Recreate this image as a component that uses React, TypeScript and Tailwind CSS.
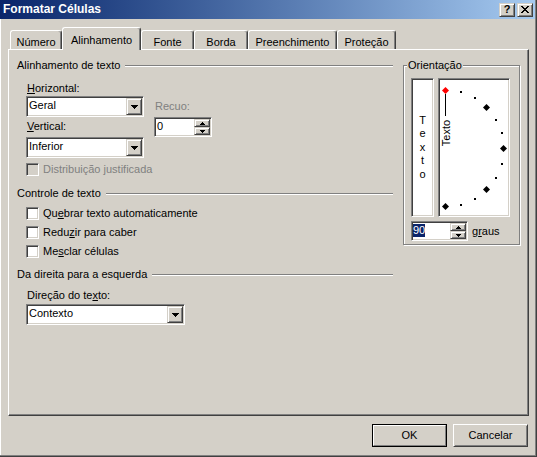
import React from "react";

const sunken =
  "border border-t-[#808080] border-l-[#808080] border-b-white border-r-white shadow-[inset_1px_1px_0_#404040,inset_-1px_-1px_0_#d4d0c8]";
const raised =
  "border border-t-[#d4d0c8] border-l-[#d4d0c8] border-b-[#404040] border-r-[#404040] shadow-[inset_1px_1px_0_#fff,inset_-1px_-1px_0_#808080] bg-[#d4d0c8]";
const pushBtn =
  "border border-t-white border-l-white border-b-[#404040] border-r-[#404040] shadow-[inset_1px_1px_0_#d4d0c8,inset_-1px_-1px_0_#808080]";

function DownArrow() {
  return (
    <svg width="7" height="4" shapeRendering="crispEdges">
      <rect x="0" y="0" width="7" height="1" />
      <rect x="1" y="1" width="5" height="1" />
      <rect x="2" y="2" width="3" height="1" />
      <rect x="3" y="3" width="1" height="1" />
    </svg>
  );
}

function SmallArrow({ up }: { up?: boolean }) {
  return (
    <svg width="5" height="3" shapeRendering="crispEdges" className={up ? "rotate-180" : ""}>
      <rect x="0" y="0" width="5" height="1" />
      <rect x="1" y="1" width="3" height="1" />
      <rect x="2" y="2" width="1" height="1" />
    </svg>
  );
}

function Combo({ value, className }: { value: string; className: string }) {
  return (
    <div className={`flex h-[21px] bg-white p-px ${sunken} ${className}`}>
      <span className="flex-1 pl-[1px] pt-[1px]">{value}</span>
      <div className={`flex h-[17px] w-[16px] items-center justify-center ${raised}`}>
        <DownArrow />
      </div>
    </div>
  );
}

function Spin({ className, children }: { className: string; children: React.ReactNode }) {
  return (
    <div className={`flex h-[20px] bg-white p-px ${sunken} ${className}`}>
      <div className="flex flex-1 items-start pt-[1px]">{children}</div>
      <div className="flex w-[16px] flex-col">
        <div className={`flex h-[8px] items-center justify-center ${raised}`}>
          <SmallArrow up />
        </div>
        <div className={`flex h-[8px] items-center justify-center ${raised}`}>
          <SmallArrow />
        </div>
      </div>
    </div>
  );
}

function Check({ children, disabled, className }: { children: React.ReactNode; disabled?: boolean; className: string }) {
  return (
    <div className={`flex h-[13px] items-center pl-[17px] ${className}`}>
      <div className={`h-[13px] w-[13px] ${sunken} ${disabled ? "bg-[#d4d0c8]" : "bg-white"}`} />
      <span className={`ml-[4px] ${disabled ? "text-[#808080]" : ""}`}>{children}</span>
    </div>
  );
}

function Header({ children, className = "" }: { children: React.ReactNode; className?: string }) {
  return (
    <div className={`flex h-[13px] pl-[8px] pr-[2px] ${className}`}>
      <span>{children}</span>
      <div className="ml-[5px] mt-[6px] h-[2px] flex-1 border-t border-b border-t-[#808080] border-b-white" />
    </div>
  );
}

function Dial() {
  const pts = [];
  for (let i = 0; i <= 12; i++) {
    const a = ((90 - i * 15) * Math.PI) / 180;
    pts.push({ x: 5.5 + 58 * Math.cos(a), y: 68.5 - 58 * Math.sin(a), i });
  }
  return (
    <svg width="68" height="135">
      {pts.map((p) =>
        p.i % 3 === 0 ? (
          <polygon
            key={p.i}
            points={`${p.x},${p.y - 3.5} ${p.x + 3.5},${p.y} ${p.x},${p.y + 3.5} ${p.x - 3.5},${p.y}`}
            fill={p.i === 0 ? "#ff0000" : "#000"}
          />
        ) : (
          <rect
            key={p.i}
            x={Math.round(p.x) - 1}
            y={Math.round(p.y) - 1}
            width="2"
            height="2"
            fill="#000"
            shapeRendering="crispEdges"
          />
        )
      )}
      <rect x="5" y="14" width="1" height="22" fill="#000" shapeRendering="crispEdges" />
      <text
        transform="translate(10,53) rotate(-90)"
        textAnchor="middle"
        fontSize="11"
        fontFamily="'Liberation Sans', Arial, sans-serif"
        fill="#000"
      >
        Texto
      </text>
    </svg>
  );
}

function CloseGlyph() {
  const rows = [
    [0, 2, 6, 2],
    [1, 2, 5, 2],
    [2, 4],
    [3, 2],
    [2, 4],
    [1, 2, 5, 2],
    [0, 2, 6, 2],
  ];
  return (
    <svg width="8" height="7" shapeRendering="crispEdges">
      {rows.map((r, y) => (
        <g key={y}>
          <rect x={r[0]} y={y} width={r[1]} height="1" />
          {r.length > 2 && <rect x={r[2]} y={y} width={r[3]} height="1" />}
        </g>
      ))}
    </svg>
  );
}

const tabs: [string, string, boolean][] = [
  ["Número", "w-[52px]", false],
  ["Alinhamento", "w-[79px]", true],
  ["Fonte", "w-[53px]", false],
  ["Borda", "w-[54px]", false],
  ["Preenchimento", "w-[89px]", false],
  ["Proteção", "w-[59px]", false],
];

export default function App() {
  return (
    <div className="flex h-[457px] w-[537px] flex-col border-b border-r border-[#404040] bg-[#d4d0c8] font-['Liberation_Sans',Arial,sans-serif] text-[11px] leading-[13px] text-black">
      <div className="flex flex-1 flex-col border-b border-r border-[#808080]">
        <div className="flex h-[19px] items-center bg-linear-to-r from-[#0a246a] to-[#a6caf0] pl-[3px] pr-[2px]">
          <span className="flex-1 text-[12px] font-bold text-white">Formatar Células</span>
          <div className={`flex h-[14px] w-[16px] items-center justify-center ${raised}`}>
            <span className="text-[11px] font-bold leading-none">?</span>
          </div>
          <div className={`ml-[2px] flex h-[14px] w-[16px] items-center justify-center ${raised}`}>
            <CloseGlyph />
          </div>
        </div>

        <div className="flex flex-1 flex-col border-l border-white">
          <div className="mt-[8px] flex h-[23px] items-start pl-[9px]">
            {tabs.map(([label, w, sel]) => (
              <div
                key={label}
                className={`flex justify-center rounded-t-[3px] border-l border-r border-t border-l-white border-t-white border-r-[#404040] shadow-[inset_-1px_0_0_#808080] ${w} ${
                  sel ? "relative z-10 h-[23px] bg-[#d4d0c8] pt-[6px]" : "mt-[3px] h-[19px] pt-[5px]"
                }`}
              >
                {label}
              </div>
            ))}
          </div>

          <div className="-mt-px ml-[7px] flex h-[367px] w-[521px] border border-b-[#404040] border-l-white border-r-[#404040] border-t-white shadow-[inset_-1px_-1px_0_#808080]">
            <div className="flex w-[386px] flex-col pt-[9px]">
              <Header>Alinhamento de texto</Header>
              <div className="flex pl-[17px]">
                <div className="flex w-[118px] flex-col">
                  <div className="mt-[10px] pl-[1px]">
                    <u>H</u>orizontal:
                  </div>
                  <Combo value="Geral" className="mt-[1px] w-[118px]" />
                  <div className="mt-[3px] pl-[1px]">
                    <u>V</u>ertical:
                  </div>
                  <Combo value="Inferior" className="mt-[4px] w-[118px]" />
                </div>
                <div className="ml-[10px] flex flex-col pt-[28px]">
                  <div className="pl-[1px] text-[#808080]">Recuo:</div>
                  <Spin className="mt-[4px] w-[58px]">
                    <span className="pl-[1px]">0</span>
                  </Spin>
                </div>
              </div>
              <Check disabled className="mt-[5px]">
                Distribuição justificada
              </Check>
              <Header className="mt-[11px]">Controle de texto</Header>
              <Check className="mt-[7px]">
                Qu<u>e</u>brar texto automaticamente
              </Check>
              <Check className="mt-[6px]">
                Redu<u>z</u>ir para caber
              </Check>
              <Check className="mt-[6px]">
                Me<u>s</u>clar células
              </Check>
              <Header className="mt-[10px]">Da direita para a esquerda</Header>
              <div className="mt-[8px] pl-[18px]">
                Direção do te<u>x</u>to:
              </div>
              <Combo value="Contexto" className="ml-[17px] mt-[2px] w-[159px]" />
            </div>

            <div className="relative ml-[8px] mt-[15px] h-[180px] w-[117px] border border-[#808080] shadow-[inset_1px_1px_0_#fff,1px_1px_0_#fff]">
              <span className="absolute left-[3px] top-[-7px] bg-[#d4d0c8] px-[1px]">Orientação</span>
              <div className="flex flex-col pl-[7px] pt-[12px]">
                <div className="flex">
                  <div className={`flex h-[139px] w-[23px] flex-col items-center justify-center bg-white leading-[13.5px] ${sunken}`}>
                    <span>T</span>
                    <span>e</span>
                    <span>x</span>
                    <span>t</span>
                    <span>o</span>
                  </div>
                  <div className={`ml-[4px] h-[139px] w-[72px] bg-white p-px ${sunken}`}>
                    <Dial />
                  </div>
                </div>
                <div className="mt-[4px] flex items-center">
                  <Spin className="w-[57px]">
                    <span className="bg-[#0a246a] text-white">90</span>
                  </Spin>
                  <span className="ml-[4px]">
                    g<u>r</u>aus
                  </span>
                </div>
              </div>
            </div>
          </div>

          <div className="mt-[8px] flex justify-end gap-[6px] pr-[7px]">
            <div className="h-[23px] w-[75px] border border-black">
              <div className="flex h-full items-center justify-center border border-b-[#808080] border-l-white border-r-[#808080] border-t-white">
                OK
              </div>
            </div>
            <div className={`flex h-[23px] w-[75px] items-center justify-center ${pushBtn}`}>Cancelar</div>
          </div>
        </div>
      </div>
    </div>
  );
}
